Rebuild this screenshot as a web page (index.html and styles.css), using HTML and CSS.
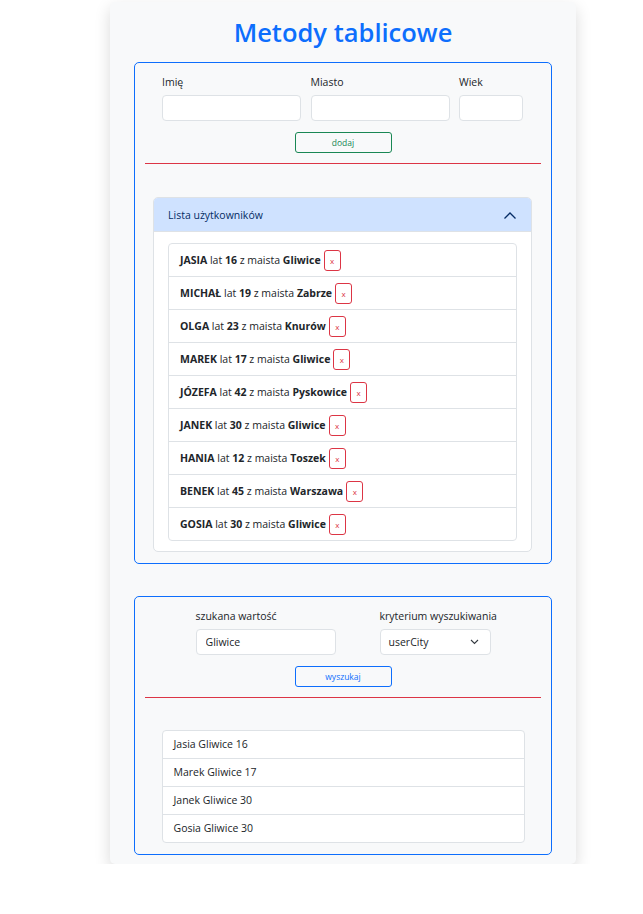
FILE: index.html
```html
<!DOCTYPE html>
<html lang="pl">
<head>
<meta charset="utf-8">
<title>Metody tablicowe</title>
<link rel="stylesheet" href="styles.css">
</head>
<body>
<main class="card">
  <h1 class="title">Metody tablicowe</h1>

  <section class="box">
    <div class="add-form">
      <div class="field">
        <label class="lbl">Imię</label>
        <input class="inp" type="text">
      </div>
      <div class="field">
        <label class="lbl">Miasto</label>
        <input class="inp" type="text">
      </div>
      <div class="field">
        <label class="lbl">Wiek</label>
        <input class="inp" type="text">
      </div>
    </div>
    <div class="btn-row"><button class="btn btn-green">dodaj</button></div>
    <hr class="sep">

    <div class="accordion">
      <div class="acc-head">
        <span>Lista użytkowników</span>
        <svg class="chev" width="14" height="9" viewBox="0 0 14 9"><path d="M1.5 7.5 L7 2 L12.5 7.5" fill="none" stroke="#052c65" stroke-width="1.3"/></svg>
      </div>
      <div class="acc-body">
        <ul class="users">
          <li class="user"><b>JASIA</b>&nbsp;lat&nbsp;<b>16</b>&nbsp;z maista&nbsp;<b>Gliwice</b><button class="del">x</button></li>
          <li class="user"><b>MICHAŁ</b>&nbsp;lat&nbsp;<b>19</b>&nbsp;z maista&nbsp;<b>Zabrze</b><button class="del">x</button></li>
          <li class="user"><b>OLGA</b>&nbsp;lat&nbsp;<b>23</b>&nbsp;z maista&nbsp;<b>Knurów</b><button class="del">x</button></li>
          <li class="user"><b>MAREK</b>&nbsp;lat&nbsp;<b>17</b>&nbsp;z maista&nbsp;<b>Gliwice</b><button class="del">x</button></li>
          <li class="user"><b>JÓZEFA</b>&nbsp;lat&nbsp;<b>42</b>&nbsp;z maista&nbsp;<b>Pyskowice</b><button class="del">x</button></li>
          <li class="user"><b>JANEK</b>&nbsp;lat&nbsp;<b>30</b>&nbsp;z maista&nbsp;<b>Gliwice</b><button class="del">x</button></li>
          <li class="user"><b>HANIA</b>&nbsp;lat&nbsp;<b>12</b>&nbsp;z maista&nbsp;<b>Toszek</b><button class="del">x</button></li>
          <li class="user"><b>BENEK</b>&nbsp;lat&nbsp;<b>45</b>&nbsp;z maista&nbsp;<b>Warszawa</b><button class="del">x</button></li>
          <li class="user"><b>GOSIA</b>&nbsp;lat&nbsp;<b>30</b>&nbsp;z maista&nbsp;<b>Gliwice</b><button class="del">x</button></li>
        </ul>
      </div>
    </div>
  </section>

  <section class="box box2">
    <div class="search-form">
      <div class="field f-search">
        <label class="lbl">szukana wartość</label>
        <input class="inp inp-val" type="text" value="Gliwice">
      </div>
      <div class="field f-crit">
        <label class="lbl">kryterium wyszukiwania</label>
        <div class="select">
          <span>userCity</span>
          <svg width="9" height="6" viewBox="0 0 9 6"><path d="M1 1 L4.5 4.5 L8 1" fill="none" stroke="#343a40" stroke-width="1.1"/></svg>
        </div>
      </div>
    </div>
    <div class="btn-row"><button class="btn btn-blue">wyszukaj</button></div>
    <hr class="sep">
    <ul class="results">
      <li class="res">Jasia Gliwice 16</li>
      <li class="res">Marek Gliwice 17</li>
      <li class="res">Janek Gliwice 30</li>
      <li class="res">Gosia Gliwice 30</li>
    </ul>
  </section>
</main>
</body>
</html>
```

FILE: styles.css
```css
* { box-sizing: border-box; }

body {
  margin: 0;
  background: #ffffff;
  font-family: "Open Sans", "Noto Sans", sans-serif;
  font-size: 10.5px;
  color: #212529;
}

.card {
  width: 466px;
  margin: 2px 0 0 110px;
  padding: 0 24px 9px;
  background: #f8f9fa;
  border-radius: 5px;
  box-shadow: 0 6px 16px rgba(0, 0, 0, 0.15);
}

.title {
  margin: 0;
  padding-top: 10px;
  height: 60px;
  line-height: 40px;
  text-align: center;
  font-size: 25.5px;
  font-weight: 600;
  color: #0d6efd;
}

.box {
  border: 1px solid #0d6efd;
  border-radius: 5px;
  padding: 11px 0 11px;
}

.box2 {
  margin-top: 32px;
}

.add-form {
  display: grid;
  grid-template-columns: 139px 139px 64px;
  column-gap: 9.5px;
  padding-left: 27px;
}

.field {
  display: flex;
  flex-direction: column;
}

.lbl {
  line-height: 16px;
  margin-bottom: 5px;
  font-size: 10.5px;
  white-space: nowrap;
}

.inp {
  height: 26px;
  border: 1px solid #dee2e6;
  border-radius: 4px;
  background: #fff;
  font: inherit;
  color: #212529;
  padding: 0 9px;
  outline: none;
}

.btn-row {
  display: flex;
  justify-content: center;
  margin-top: 11px;
}

.btn {
  width: 97px;
  height: 21px;
  background: transparent;
  border-radius: 3px;
  font-family: inherit;
  font-size: 8.5px;
  padding: 0;
}

.btn-green {
  border: 1px solid #198754;
  color: #198754;
}

.btn-blue {
  border: 1px solid #0d6efd;
  color: #0d6efd;
}

.sep {
  margin: 10px 10px 0;
  border: 0;
  border-top: 1px solid #dc3545;
  opacity: 1;
}

.accordion {
  margin: 33px 19px 0 18px;
  border: 1px solid #dee2e6;
  border-radius: 5px;
  background: #fff;
  overflow: hidden;
}

.acc-head {
  height: 34px;
  background: #cfe2ff;
  color: #052c65;
  display: flex;
  align-items: center;
  justify-content: space-between;
  padding: 0 14px 0 14px;
  box-shadow: inset 0 -1px 0 #dee2e6;
}

.chev { display: block; }

.acc-body {
  padding: 11px 14px 10px;
}

.users, .results {
  list-style: none;
  margin: 0;
  padding: 0;
  border: 1px solid #dee2e6;
  border-radius: 4px;
  background: #fff;
}

.user {
  display: flex;
  align-items: center;
  height: 33px;
  padding: 0 11px;
  border-top: 1px solid #dee2e6;
  white-space: nowrap;
}

.user:first-child { border-top: 0; height: 32px; }

.user b { font-weight: 700; }

.del {
  margin-left: 3px;
  margin-top: 1px;
  width: 17px;
  height: 21px;
  padding: 1px 0 0;
  background: transparent;
  border: 1px solid #dc3545;
  border-radius: 3px;
  color: #dc3545;
  font-family: inherit;
  font-size: 8px;
  line-height: 1;
}

.search-form {
  display: flex;
  justify-content: center;
  gap: 44px;
}

.f-search { width: 140px; }
.f-crit { width: 111px; }

.select {
  height: 26px;
  border: 1px solid #dee2e6;
  border-radius: 4px;
  background: #fff;
  display: flex;
  align-items: center;
  justify-content: space-between;
  padding: 0 11px 0 8px;
}

.select svg { display: block; }

.results {
  width: 363px;
  margin: 32px auto 0;
}

.res {
  height: 28px;
  line-height: 27px;
  padding: 0 11px;
  border-top: 1px solid #dee2e6;
}

.res:first-child { border-top: 0; height: 27px; }
```
